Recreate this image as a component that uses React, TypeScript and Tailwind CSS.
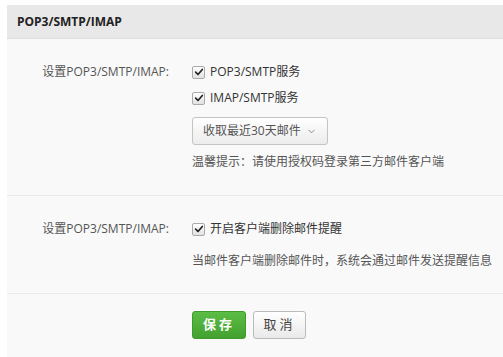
import { ChevronDown } from "lucide-react";

function Check({ label }: { label: string }) {
  return (
    <label className="flex items-center gap-[5px] h-[26px] text-[12px] text-[#333]">
      <span className="w-[13px] h-[13px] rounded-[2px] border border-[#aaa] bg-gradient-to-b from-white to-[#e2e2e2] flex items-center justify-center">
        <svg viewBox="0 0 12 12" className="w-[10px] h-[10px]">
          <path d="M2 6.2 L4.8 9 L10 3" fill="none" stroke="#222" strokeWidth="2" strokeLinecap="round" strokeLinejoin="round" />
        </svg>
      </span>
      <span>{label}</span>
    </label>
  );
}

export default function App() {
  return (
    <div className="min-h-screen bg-white pt-[5px] pl-[7px] font-['Open_Sans','Noto_Sans_CJK_SC',sans-serif]">
      <div className="bg-[#f9f9f9] min-h-[352px]">
        {/* Header */}
        <div className="h-[34px] bg-[#e8e8e8] border-b border-[#dedede] flex items-center pl-[10px] text-[12px] font-bold text-[#222]">
          POP3/SMTP/IMAP
        </div>

        {/* Section 1 */}
        <div className="grid grid-cols-[174px_1fr] pt-[20px] pb-[24px] border-b border-[#ebebeb]">
          <div className="text-right pr-[12px] text-[12px] text-[#555] h-[26px] leading-[26px]">设置POP3/SMTP/IMAP:</div>
          <div className="pl-[11px]">
            <Check label="POP3/SMTP服务" />
            <Check label="IMAP/SMTP服务" />
            <button className="mt-[6px] h-[28px] px-[10px] whitespace-nowrap rounded-[3px] border border-[#c4c4c4] bg-gradient-to-b from-white to-[#ececec] text-[12px] text-[#555] flex items-center gap-[5px]">
              收取最近30天邮件
              <ChevronDown size={11} strokeWidth={1.5} className="text-[#666]" />
            </button>
            <div className="mt-[8px] text-[12px] text-[#555] leading-[18px]">温馨提示：请使用授权码登录第三方邮件客户端</div>
          </div>
        </div>

        {/* Section 2 */}
        <div className="grid grid-cols-[174px_1fr] pt-[20px] pb-[23px] border-b border-[#ebebeb]">
          <div className="text-right pr-[12px] text-[12px] text-[#555] h-[26px] leading-[26px]">设置POP3/SMTP/IMAP:</div>
          <div className="pl-[11px]">
            <Check label="开启客户端删除邮件提醒" />
            <div className="mt-[10px] text-[12px] text-[#555] leading-[18px]">当邮件客户端删除邮件时，系统会通过邮件发送提醒信息</div>
          </div>
        </div>

        {/* Buttons */}
        <div className="flex gap-[7px] pl-[185px] pt-[17px]">
          <button className="h-[28px] w-[54px] rounded-[3px] border border-[#3e9a2a] bg-gradient-to-b from-[#5bbd45] to-[#43a12f] text-white text-[13px] font-bold tracking-[3px]">
            保存
          </button>
          <button className="h-[28px] w-[53px] rounded-[3px] border border-[#bbb] bg-gradient-to-b from-white to-[#e9e9e9] text-[#444] text-[13px] tracking-[3px]">
            取消
          </button>
        </div>
      </div>
    </div>
  );
}
